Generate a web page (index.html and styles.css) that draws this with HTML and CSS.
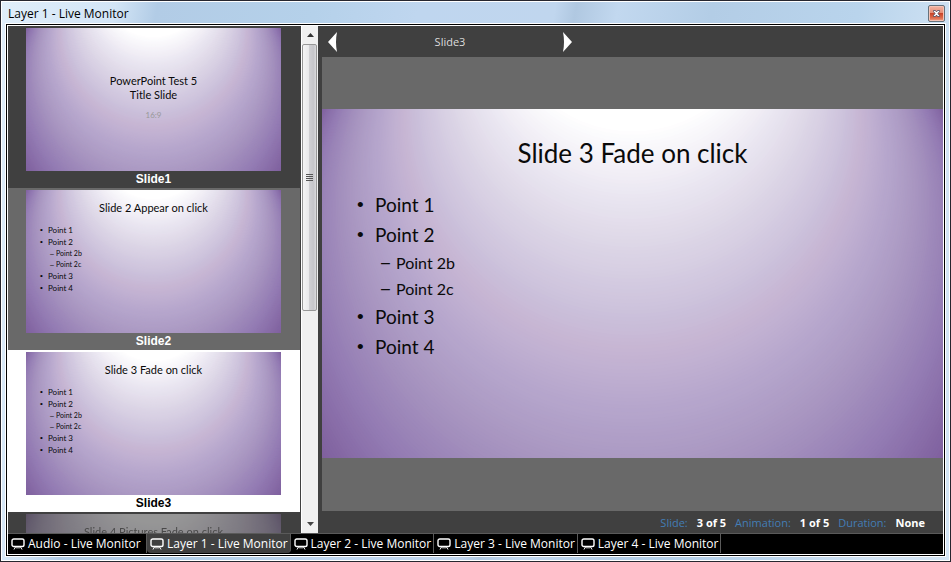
FILE: index.html
```html
<!DOCTYPE html>
<html lang="en">
<head>
<meta charset="utf-8">
<title>Layer 1 - Live Monitor</title>
<link rel="stylesheet" href="styles.css">
</head>
<body>
<svg class="defs" aria-hidden="true">
  <defs>
    <symbol id="violet" viewBox="0 0 621 349" preserveAspectRatio="none"></symbol>
    <symbol id="screen" viewBox="0 0 14 12">
      <rect x="1" y="1" width="12" height="7.500" rx="1.800" fill="none" stroke="#fff" stroke-width="1.400"/>
      <path d="M4.500 9L3 11.500M9.500 9L11 11.500M6 9v1.500M8 9v1.500" fill="none" stroke="#fff"/>
    </symbol>
  </defs>
</svg>
<div class="window">
  <header class="titlebar">
    <h1 class="title">Layer 1 - Live Monitor</h1>
    <button class="close" aria-label="Close">
      <svg width="7" height="7" viewBox="0 0 7 7"><path d="M0.500 0.500h2l1 1.500 1-1.500h2v1L5 3.500l1.500 2v1h-2l-1-1.500-1 1.500h-2v-1L2 3.500l-1.500-2z" fill="#fff" stroke="#46465e" stroke-width="0.800"/></svg>
    </button>
  </header>
  <div class="frame">
    <div class="workspace">
      <ol class="list">
        <li class="item">
          <div class="slide slide-small slide-title">
            <svg class="backdrop" aria-hidden="true"><use href="#violet"/></svg>
            <h2>PowerPoint Test 5<br>Title Slide</h2>
            <p>16:9</p>
          </div>
          <div class="caption">Slide1</div>
        </li>
        <li class="item item-shown">
          <div class="slide slide-small">
            <svg class="backdrop" aria-hidden="true"><use href="#violet"/></svg>
            <h2>Slide 2 Appear on click</h2>
            <ul><li>Point 1</li><li>Point 2<ul><li>Point 2b</li><li>Point 2c</li></ul></li><li>Point 3</li><li>Point 4</li></ul>
          </div>
          <div class="caption">Slide2</div>
        </li>
        <li class="item item-current">
          <div class="slide slide-small">
            <svg class="backdrop" aria-hidden="true"><use href="#violet"/></svg>
            <h2>Slide 3 Fade on click</h2>
            <ul><li>Point 1</li><li>Point 2<ul><li>Point 2b</li><li>Point 2c</li></ul></li><li>Point 3</li><li>Point 4</li></ul>
          </div>
          <div class="caption">Slide3</div>
        </li>
        <li class="item">
          <div class="slide slide-small slide-dim">
            <svg class="backdrop" aria-hidden="true"><use href="#violet"/></svg>
            <h2>Slide 4 Pictures Fade on click</h2>
          </div>
        </li>
      </ol>
      <div class="scrollbar">
        <button class="arrow" aria-label="Scroll up"><svg width="7" height="4" viewBox="0 0 7 4"><path d="M0 4L3.500 0 7 4z" fill="#333"/></svg></button>
        <div class="track"><div class="grip"><i></i><i></i><i></i><i></i></div></div>
        <button class="arrow" aria-label="Scroll down"><svg width="7" height="4" viewBox="0 0 7 4"><path d="M0 0h7L3.500 4z" fill="#444"/></svg></button>
      </div>
      <main class="monitor">
        <nav class="pager">
          <button aria-label="Previous slide"><svg width="9" height="20" viewBox="0 0 9 20"><path d="M9 0Q7 10 9 20L0 10z" fill="#fff"/></svg></button>
          <span>Slide3</span>
          <button aria-label="Next slide"><svg width="9" height="20" viewBox="0 0 9 20"><path d="M0 0Q2 10 0 20L9 10z" fill="#fff"/></svg></button>
        </nav>
        <div class="stage">
          <div class="slide slide-large">
            <svg class="backdrop" aria-hidden="true"><use href="#violet"/></svg>
            <h2>Slide 3 Fade on click</h2>
            <ul><li>Point 1</li><li>Point 2<ul><li>Point 2b</li><li>Point 2c</li></ul></li><li>Point 3</li><li>Point 4</li></ul>
          </div>
        </div>
        <dl class="status">
          <div><dt>Slide:</dt><dd>3 of 5</dd></div>
          <div><dt>Animation:</dt><dd>1 of 5</dd></div>
          <div><dt>Duration:</dt><dd>None</dd></div>
        </dl>
      </main>
    </div>
    <nav class="tabs">
      <button class="tab"><svg width="14" height="12"><use href="#screen"/></svg>Audio - Live Monitor</button>
      <button class="tab tab-active"><svg width="14" height="12"><use href="#screen"/></svg>Layer 1 - Live Monitor</button>
      <button class="tab"><svg width="14" height="12"><use href="#screen"/></svg>Layer 2 - Live Monitor</button>
      <button class="tab"><svg width="14" height="12"><use href="#screen"/></svg>Layer 3 - Live Monitor</button>
      <button class="tab"><svg width="14" height="12"><use href="#screen"/></svg>Layer 4 - Live Monitor</button>
    </nav>
  </div>
</div>
<script src="backdrop.js"></script>
</body>
</html>
```
FILE: backdrop.js
```js
// Slide theme backdrop: a path gradient whose focus lies above the slide.
// Circles shrink towards the focus and are painted largest first.
const stops = [
  [0.37, [255, 255, 255]],
  [0.455, [234, 230, 241]],
  [0.505, [223, 217, 232]],
  [0.607, [202, 191, 218]],
  [0.64, [199, 182, 211]],
  [0.665, [193, 177, 210]],
  [0.725, [180, 164, 203]],
  [0.79, [169, 151, 193]],
  [0.9, [147, 123, 179]],
  [1, [127, 96, 158]]
];

function colorAt(t) {
  if (t <= stops[0][0]) return stops[0][1];
  const i = stops.findIndex(s => s[0] >= t);
  const [t0, a] = stops[i - 1];
  const [t1, b] = stops[i];
  const k = (t - t0) / (t1 - t0);
  return a.map((v, n) => Math.round(v + (b[n] - v) * k));
}

const symbol = document.getElementById("violet");
const steps = 150;
for (let i = 0; i <= steps; i++) {
  const t = 1 - (i / steps) * 0.65;
  const circle = document.createElementNS("http://www.w3.org/2000/svg", "circle");
  circle.setAttribute("cx", 310.5);
  circle.setAttribute("cy", -279 + 453.5 * t);
  circle.setAttribute("r", 357 * t);
  circle.setAttribute("fill", `rgb(${colorAt(t).join(",")})`);
  symbol.append(circle);
}
```
FILE: styles.css
```css
* { box-sizing: border-box; }
html, body { height: 100%; }
body {
  margin: 0;
  overflow: hidden;
  font: 11px/16px "Open Sans", "Noto Sans", sans-serif;
}
h1, h2, p, ul, ol, dl, dd { margin: 0; padding: 0; font-weight: normal; list-style: none; }
button { margin: 0; padding: 0; border: 0; background: none; color: inherit; font: inherit; }
svg { display: block; }
.defs { position: absolute; width: 0; height: 0; }

.window {
  height: 100vh;
  display: flex;
  flex-direction: column;
  padding: 0 4px 4px;
  border: 1px solid #26262f;
  box-shadow: inset 0 0 0 1px #fff;
  background: linear-gradient(100deg, #e0eefa 0, #d3e5f6 11%, #b2cce6 15%, #b5d1ea 30%, #bfd6ef 40%, #c0d6ee 53%, #b0c8e1 55%, #c2d8ef 59%, #b3cde6 68%, #b9d4ec 82%, #d3e4f4 93%, #d3e4f4 100%);
}
.titlebar { flex: none; height: 22px; display: flex; align-items: center; justify-content: space-between; padding: 3px 1px 0 3px; }
.title { font-size: 12px; color: #000; }
.close {
  width: 17px; height: 17px;
  display: grid; place-items: center;
  border: 1px solid #66727c;
  border-radius: 2px;
  background: linear-gradient(#f2b5a4 0, #e58b74 48%, #c9452a 50%, #dd6c4d 80%, #f1a58b 100%);
  box-shadow: inset 0 0 0 1px #f4c3b5;
}
.frame {
  flex: 1; min-height: 0;
  display: flex; flex-direction: column;
  border: 1px solid #fff;
  outline: 1px solid #000;
  outline-offset: 0;
  box-shadow: 0 0 0 2px #fff;
  margin: 2px;
  background: #404040;
}
.workspace { flex: 1; min-height: 0; display: flex; }

.list { flex: none; width: 293px; overflow: hidden; padding-right: 1px; color: #fff; }
.item { height: 162px; padding: 2px 1px 0 0; }
.item-shown { background: #696969; }
.item-current { background: #fff; color: #000; }
.caption { text-align: center; font: bold 12px/16px "Liberation Sans", Arial, sans-serif; }

.slide { position: relative; z-index: 0; margin: 0 auto; overflow: hidden; color: #0a0a0a; background: #7f609e; font-family: Lato, "Open Sans", sans-serif; aspect-ratio: 255 / 143; }
.backdrop { position: absolute; z-index: -1; inset: 0; width: 100%; height: 100%; }
.slide h2 { text-align: center; }
.slide ul li::before { content: "•"; float: left; font-family: "Liberation Sans", Arial, sans-serif; }
.slide ul ul li::before { content: "–"; }

.slide-small { width: 255px; padding-top: 10px; font-size: 8px; line-height: 12px; }
.slide-small h2 { font-size: 11px; line-height: 16px; margin-bottom: 8px; }
.slide-small > ul { padding-left: 14px; }
.slide-small li::before { width: 8px; }
.slide-small ul ul { padding-left: 10px; font-size: 7px; line-height: 11px; }
.slide-small ul ul li::before { width: 6px; }
.slide-small.slide-title { padding-top: 46px; }
.slide-title h2 { line-height: 14px; margin-bottom: 7px; }
.slide-title p { text-align: center; color: #999; }
.slide-dim { color: #555; filter: saturate(0.7); }
.slide-dim::after { content: ""; position: absolute; inset: 0; background: #404040; opacity: 0.55; }

.slide-large { width: 100%; aspect-ratio: 621 / 349; padding-top: 28px; font-size: 19px; line-height: 30px; }
.slide-large h2 { font-size: 26px; line-height: 32px; margin-bottom: 21px; }
.slide-large > ul { padding-left: 35px; }
.slide-large li::before { width: 18px; }
.slide-large ul ul { padding-left: 24px; font-size: 16px; line-height: 26px; }
.slide-large ul ul li::before { width: 15px; }

.scrollbar { flex: none; width: 17px; display: flex; flex-direction: column; background: #f0f0f0; border-left: 1px solid #fff; }
.arrow { flex: none; height: 18px; display: grid; place-items: center; }
.track { flex: 1; }
.grip {
  width: 15px; height: 267px;
  display: flex; flex-direction: column; align-items: center; justify-content: center; gap: 1px;
  border: 1px solid #979797; border-radius: 2px;
  background: linear-gradient(90deg, #f5f5f5 0, #e9e9eb 45%, #d0d0d3 50%, #c6c6ca 80%, #dadadc 100%);
}
.grip i { width: 7px; height: 1px; background: #555; }

.monitor { flex: 1; min-width: 0; display: flex; flex-direction: column; margin-left: 4px; }
.pager { flex: none; width: 256px; height: 31px; display: flex; align-items: center; justify-content: space-between; padding: 0 6px; color: #dcdcdc; }
.stage { flex: 1; min-height: 0; display: flex; align-items: center; padding-bottom: 1px; background: #696969; }
.status { flex: none; height: 22px; display: flex; align-items: center; justify-content: flex-end; gap: 9px; padding: 2px 18px 0 0; color: #fff; }
.status div { display: flex; gap: 9px; }
.status dt { color: #437db5; }
.status dd { font-weight: bold; }

.tabs { flex: none; height: 21px; display: flex; padding-bottom: 1px; background: #000; border-top: 1px solid #5a5a5a; color: #fff; }
.tab { display: flex; align-items: center; gap: 3px; min-width: 139px; padding: 0 2px 0 3px; border-right: 1px solid #5a5a5a; font-size: 12px; white-space: nowrap; }
.tab-active { background: #404040; border-radius: 0 0 4px 4px; }
```
